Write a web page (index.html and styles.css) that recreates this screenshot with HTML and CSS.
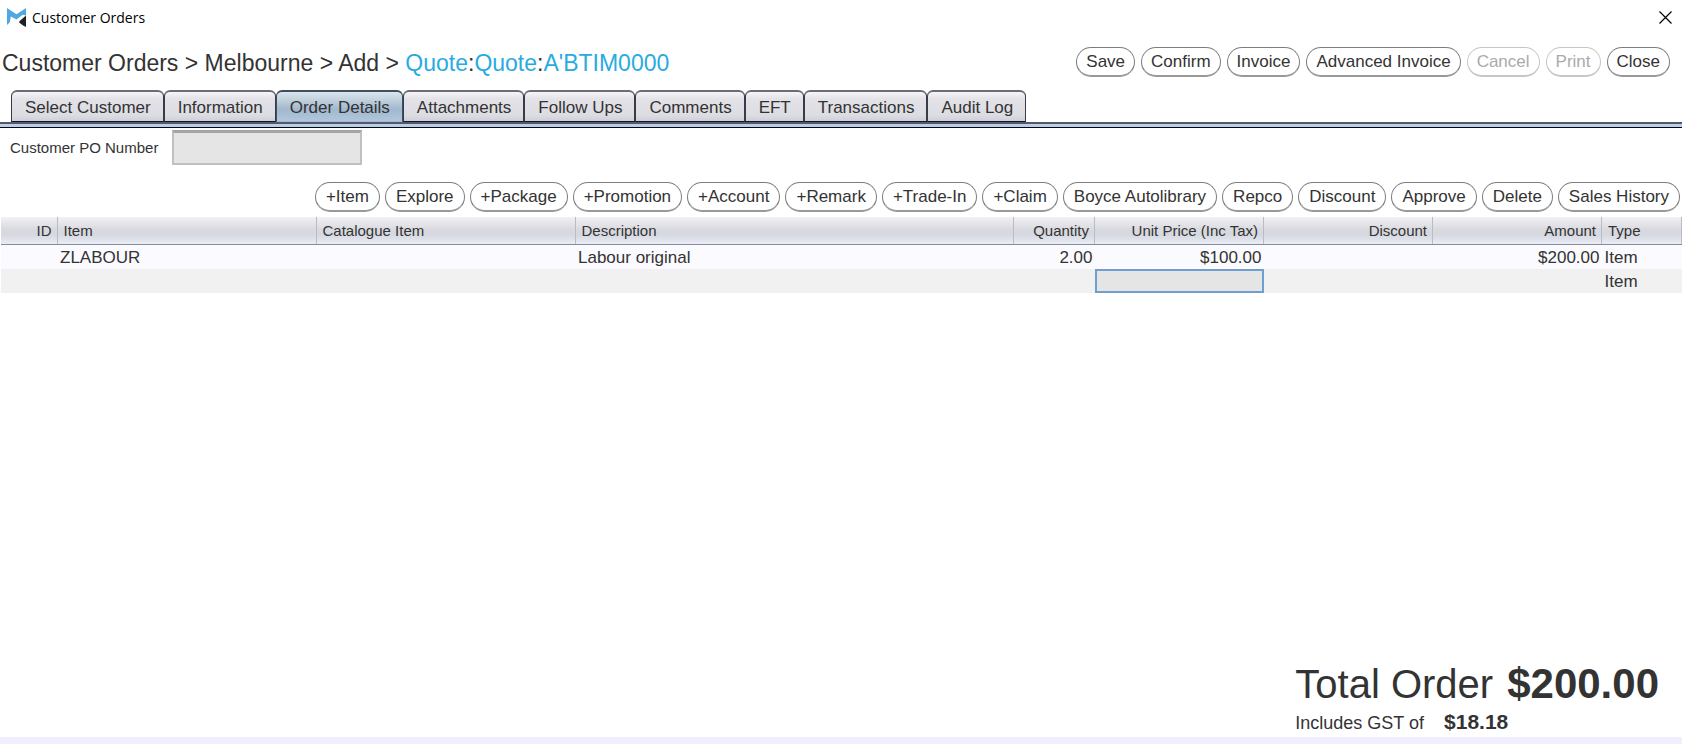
FILE: index.html
```html
<!DOCTYPE html>
<html lang="en">
<head>
<meta charset="utf-8">
<title>Customer Orders</title>
<link rel="stylesheet" href="styles.css">
</head>
<body>
<div class="window">
  <header class="titlebar">
    <svg class="logo" viewBox="0 0 20 20" aria-hidden="true">
      <path fill="#4fa8e0" d="M0 0 10 6.500 20 0V8L16.500 7 10 12 4 9 3 15 0 18z"/>
      <path fill="#1d2024" d="M20 8V20L17 18.500 13 15.500V14z"/>
    </svg>
    <span class="title">Customer Orders</span>
    <button class="close-window" type="button" aria-label="Close window">
      <svg viewBox="0 0 13 13" aria-hidden="true"><path d="M.5.5l12 12M12.500.5l-12 12" stroke="#000" stroke-width="1.200" fill="none"/></svg>
    </button>
  </header>

  <div class="topbar">
    <h1 class="breadcrumb">Customer Orders &gt; Melbourne &gt; Add &gt; <a href="#">Quote</a>:<a href="#">Quote</a>:<a href="#">A'BTIM0000</a></h1>
    <div class="actions">
      <button class="pill" type="button">Save</button>
      <button class="pill" type="button">Confirm</button>
      <button class="pill" type="button">Invoice</button>
      <button class="pill" type="button">Advanced Invoice</button>
      <button class="pill" type="button" disabled>Cancel</button>
      <button class="pill" type="button" disabled>Print</button>
      <button class="pill" type="button">Close</button>
    </div>
  </div>

  <nav class="tabs" role="tablist">
    <button class="tab" type="button" role="tab">Select Customer</button>
    <button class="tab" type="button" role="tab">Information</button>
    <button class="tab selected" type="button" role="tab" aria-selected="true">Order Details</button>
    <button class="tab" type="button" role="tab">Attachments</button>
    <button class="tab" type="button" role="tab">Follow Ups</button>
    <button class="tab" type="button" role="tab">Comments</button>
    <button class="tab" type="button" role="tab">EFT</button>
    <button class="tab" type="button" role="tab">Transactions</button>
    <button class="tab" type="button" role="tab">Audit Log</button>
  </nav>
  <div class="band"></div>

  <main class="content">
    <div class="field">
      <label for="po">Customer PO Number</label>
      <input id="po" type="text">
    </div>

    <div class="toolbar">
      <button class="pill" type="button">+Item</button>
      <button class="pill" type="button">Explore</button>
      <button class="pill" type="button">+Package</button>
      <button class="pill" type="button">+Promotion</button>
      <button class="pill" type="button">+Account</button>
      <button class="pill" type="button">+Remark</button>
      <button class="pill" type="button">+Trade-In</button>
      <button class="pill" type="button">+Claim</button>
      <button class="pill" type="button">Boyce Autolibrary</button>
      <button class="pill" type="button">Repco</button>
      <button class="pill" type="button">Discount</button>
      <button class="pill" type="button">Approve</button>
      <button class="pill" type="button">Delete</button>
      <button class="pill" type="button">Sales History</button>
    </div>

    <div class="grid-wrap">
      <table class="lines">
        <colgroup>
          <col class="c-id"><col class="c-item"><col class="c-item"><col class="c-desc">
          <col class="c-qty"><col class="c-money"><col class="c-money"><col class="c-money"><col class="c-type">
        </colgroup>
        <thead>
          <tr>
            <th class="num">ID</th><th>Item</th><th>Catalogue Item</th><th>Description</th>
            <th class="num">Quantity</th><th class="num">Unit Price (Inc Tax)</th><th class="num">Discount</th><th class="num">Amount</th><th>Type</th>
          </tr>
        </thead>
        <tbody>
          <tr>
            <td></td><td>ZLABOUR</td><td></td><td>Labour original</td>
            <td class="num">2.00</td><td class="num">$100.00</td><td></td><td class="num">$200.00</td><td>Item</td>
          </tr>
          <tr>
            <td></td><td></td><td></td><td></td><td></td>
            <td class="edit"><input type="text" aria-label="Unit Price (Inc Tax)"></td><td></td><td></td><td>Item</td>
          </tr>
        </tbody>
      </table>
    </div>
  </main>

  <section class="totals">
    <div class="total-row"><span>Total Order</span><strong>$200.00</strong></div>
    <div class="gst-row"><span>Includes GST of</span><strong>$18.18</strong></div>
  </section>
  <footer class="status"></footer>
</div>
</body>
</html>
```
FILE: styles.css
```css
* { box-sizing: border-box; }

body {
  margin: 0;
  background: #fff;
  color: #333;
  font-family: "Liberation Sans", Arial, sans-serif;
  font-size: 17px;
}

button, input { font: inherit; color: inherit; }

.window {
  display: flex;
  flex-direction: column;
  min-height: 100vh;
}

.titlebar {
  display: flex;
  align-items: center;
  height: 34px;
  padding: 0 10px 0 7px;
  color: #000;
}
.logo { width: 19px; height: 19px; margin-right: 6px; }
.title { flex: 1; padding-top: 2px; font: 14px/20px "Open Sans", "Noto Sans", sans-serif; }
.close-window { display: flex; padding: 0; border: 0; background: none; }
.close-window svg { width: 13px; height: 13px; }

.topbar {
  display: flex;
  align-items: center;
  justify-content: space-between;
  height: 56px;
  padding: 0 12px 0 2px;
}
.breadcrumb { margin: 0; padding-top: 2px; font-size: 23px; font-weight: 400; line-height: 28px; }
.breadcrumb a { color: #29abe2; text-decoration: none; }

.actions, .toolbar { display: flex; gap: 6px; }

.pill {
  height: 30px;
  padding: 1px 9px 0;
  border: 1px solid #7d7d7d;
  border-bottom: 2px solid #999;
  border-radius: 15px;
  background: #fff;
  line-height: 26px;
  white-space: nowrap;
}
.pill:disabled { color: #aaa; border-color: #c6c6c6; }

.tabs { display: flex; padding-left: 11px; }
.tab {
  height: 32px;
  padding: 3px 12px 0 13px;
  border: 1px solid #3a3a48;
  border-top: 2px solid #6c6c74;
  border-bottom: 1px solid #16162a;
  border-radius: 6px 6px 0 0;
  background: linear-gradient(#f6f6f8, #e2e2e7 25%, #dcdce3 80%, #cfcfd8);
  white-space: nowrap;
}
.tab.selected {
  border-color: #3d5061;
  border-bottom-color: #a4b9cf;
  background: linear-gradient(#dbe5ec, #b9cbd9 35%, #a2b8cd 60%, #b0c6dc);
}
.band {
  height: 6px;
  border-top: 2px solid #55586a;
  border-bottom: 1px solid #050518;
  background: #b8cfe4;
}

.content { flex: 1; }

.field {
  display: flex;
  align-items: center;
  gap: 14px;
  height: 39px;
  padding: 0 10px;
  font-size: 15px;
}
.field input {
  width: 190px;
  height: 35px;
  border: 2px solid #c0c0c0;
  border-top: 3px solid #a4a4a4;
  background: #e5e5e5;
}

.toolbar { justify-content: flex-end; gap: 5px; padding: 15px 2px 0 0; }
.toolbar .pill { padding: 1px 10px 0; }

.grid-wrap { padding: 5px 0 0 1px; }
.lines { width: 100%; border-collapse: collapse; table-layout: fixed; }
.c-id { width: 56px; }
.c-item { width: 259px; }
.c-qty { width: 81px; }
.c-money { width: 169px; }
.c-type { width: 80px; }

.lines th {
  height: 27px;
  padding: 0 5px 0 6px;
  border-right: 1px solid #b9bcc4;
  border-bottom: 1px solid #868c98;
  background: linear-gradient(#f2f2f4, #d9dae0 45%, #d6d8e0 65%, #e9ebf5);
  font-size: 15px;
  font-weight: 400;
  text-align: left;
  white-space: nowrap;
}
.lines td {
  height: 24px;
  padding: 2px 2px 0 3px;
  background: #fafaff;
  line-height: 22px;
  white-space: nowrap;
}
.lines tr:last-child td { background: #f1f1f1; }
.lines thead tr:last-child th { background: linear-gradient(#f2f2f4, #d9dae0 45%, #d6d8e0 65%, #e9ebf5); }
.lines .num { text-align: right; }
.lines .edit { padding: 0; }
.edit input {
  display: block;
  width: 100%;
  height: 24px;
  border: 2px solid #6f9fcf;
  background: #e5e5e5;
}

.totals {
  align-self: flex-end;
  padding: 0 23px 0 0;
}
.total-row, .gst-row { display: flex; align-items: baseline; }
.total-row { gap: 14px; font-size: 40px; line-height: 48px; }
.total-row strong { font-size: 42px; }
.gst-row { gap: 20px; font-size: 18px; line-height: 28px; }
.gst-row strong { font-size: 21px; }

.status { height: 7px; background: #f0effd; }
```
